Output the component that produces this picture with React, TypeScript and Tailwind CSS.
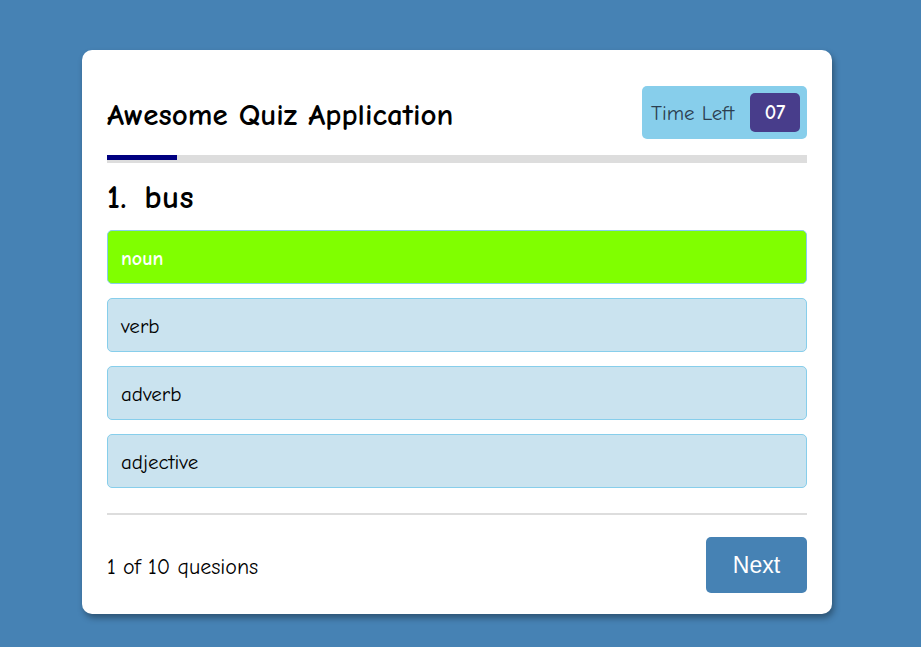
import React from 'react';

const options = ['noun', 'verb', 'adverb', 'adjective'];
const selected = 0;

const comic = 'font-["Comic_Sans_MS","Comic_Neue","DejaVu_Sans",sans-serif]';

export default function App() {
  return (
    <div className="min-h-[647px] w-full bg-[#4682b4] pt-[50px]">
      <div
        className={`ml-[82px] w-[750px] h-[564px] rounded-[10px] bg-white px-[25px] pt-[36px] shadow-[2px_4px_6px_rgba(0,0,0,0.35)] ${comic}`}
      >
        {/* header */}
        <div className="flex h-[53px] items-center justify-between">
          <h1 className="pt-[5px] text-[31px] font-bold text-black leading-none">Awesome Quiz Application</h1>
          <div className="flex h-[53px] w-[165px] items-center justify-between rounded-[5px] bg-[#87ceeb] pl-[9px] pr-[7px]">
            <span className="pt-[2px] text-[21px] text-[#2c3e50]">Time Left</span>
            <span className="flex h-[39px] w-[50px] items-center justify-center rounded-[5px] bg-[#483d8b] text-[20px] font-bold text-white">
              07
            </span>
          </div>
        </div>

        {/* progress */}
        <div className="mt-[16px] h-[8px] bg-[#dddddd]">
          <div className="h-[5px] w-[70px] bg-[#000080]" />
        </div>

        {/* question */}
        <div className="pt-[14px]">
          <h2 className="h-[53px] text-[33px] font-bold leading-[40px] text-black tracking-[0.5px] [word-spacing:5px]">1. bus</h2>
          <div className="flex flex-col gap-[14px]">
            {options.map((opt, i) => (
              <div
                key={opt}
                className={
                  i === selected
                    ? 'flex h-[54px] items-center rounded-[5px] border border-[#87ceeb] bg-[#80ff00] pl-[13px] pt-[3px] text-[20px] font-bold text-white'
                    : 'flex h-[54px] items-center rounded-[5px] border border-[#87ceeb] bg-[#cae3ef] pl-[13px] pt-[3px] text-[21px] text-black'
                }
              >
                {opt}
              </div>
            ))}
          </div>
        </div>

        {/* footer */}
        <div className="mt-[25px] border-t-2 border-[#dddddd] pt-[22px]">
          <div className="flex h-[56px] items-center justify-between">
            <span className="pt-[4px] text-[22px] text-black">1 of 10 quesions</span>
            <button className="h-[56px] w-[101px] rounded-[5px] bg-[#4682b4] font-['Liberation_Sans',Arial,sans-serif] text-[23px] text-white">
              Next
            </button>
          </div>
        </div>
      </div>
    </div>
  );
}
